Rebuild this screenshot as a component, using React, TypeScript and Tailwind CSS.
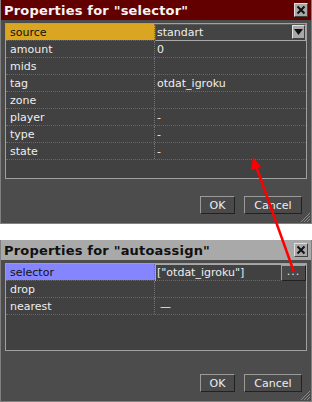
import React from 'react';

type Row = { name: string; value?: React.ReactNode; active?: boolean };

const CloseButton: React.FC = () => (
  <div className="w-[14px] h-[14px] bg-[#a8a8a8] border border-t-[#e0e0e0] border-l-[#e0e0e0] border-b-[#404040] border-r-[#404040] flex items-center justify-center">
    <svg width="10" height="10" viewBox="0 0 10 10">
      <path d="M1.5 1.5 L8.5 8.5 M8.5 1.5 L1.5 8.5" stroke="#111" strokeWidth="2" />
    </svg>
  </div>
);

const Grip: React.FC = () => (
  <svg width="12" height="12" viewBox="0 0 12 12" className="absolute right-0 bottom-0">
    <path d="M11 2 L2 11 M11 5 L5 11 M11 8 L8 11" stroke="#8a8a8a" strokeWidth="1" />
  </svg>
);

const Button: React.FC<{ label: string; w: string }> = ({ label, w }) => (
  <div
    className={`${w} h-[18px] border border-t-[#9a9a9a] border-l-[#9a9a9a] border-b-[#222] border-r-[#222] bg-[#4a4a4a] flex items-center justify-center text-[#eeeeee]`}
  >
    {label}
  </div>
);

const Dialog: React.FC<{
  title: string;
  focused: boolean;
  rows: Row[];
  tableH: string;
  highlight: string;
  height: string;
}> = ({ title, focused, rows, tableH, highlight, height }) => (
  <div className={`relative ${height} bg-[#4c4c4c] border-l border-r border-b border-[#808080] flex flex-col`}>
    <div
      className={`h-[20px] flex items-center justify-between pl-[3px] pr-[3px] ${
        focused ? 'bg-[#620000] text-[#f4f4f4]' : 'bg-[#a9a9a9] text-[#111]'
      }`}
    >
      <span className="text-[13px] font-bold tracking-[0.2px]">{title}</span>
      <CloseButton />
    </div>
    <div className="px-[4px] pt-[3px]">
      <div className={`${tableH} border border-[#a0a0a0] bg-[#414141]`}>
        {rows.map((r) => (
          <div key={r.name} className="h-[17px] flex border-b border-dotted border-[#686868]">
            <div
              className={`w-[149px] shrink-0 pl-[4px] flex items-center border-r border-dotted border-[#747474] ${
                r.active ? `${highlight} text-[#111]` : 'text-[#eeeeee]'
              }`}
            >
              {r.name}
            </div>
            <div className="flex-1 flex items-center text-[#eeeeee] min-w-0">{r.value}</div>
          </div>
        ))}
      </div>
    </div>
    <div className="flex-1 flex items-end justify-end gap-[9px] pr-[9px] pb-[9px]">
      <Button label="OK" w="w-[35px]" />
      <Button label="Cancel" w="w-[58px]" />
    </div>
    <Grip />
  </div>
);

const Plain: React.FC<{ text: string }> = ({ text }) => <span className="pl-[2px]">{text}</span>;

export default function App() {
  const rows1: Row[] = [
    {
      name: 'source',
      active: true,
      value: (
        <div className="w-full h-[17px] flex items-center justify-between border border-t-[#5a5a5a] border-l-[#5a5a5a] border-b-[#a8a8a8] border-r-[#a8a8a8] bg-[#444]">
          <span className="pl-[1px]">standart</span>
          <div className="w-[13px] h-[14px] bg-[#a8a8a8] border border-t-[#e0e0e0] border-l-[#e0e0e0] border-b-[#404040] border-r-[#404040] flex items-center justify-center">
            <svg width="9" height="6" viewBox="0 0 9 6">
              <path d="M0 0 H9 L4.5 6 Z" fill="#111" />
            </svg>
          </div>
        </div>
      ),
    },
    { name: 'amount', value: <Plain text="0" /> },
    { name: 'mids' },
    { name: 'tag', value: <Plain text="otdat_igroku" /> },
    { name: 'zone' },
    { name: 'player', value: <Plain text="-" /> },
    { name: 'type', value: <Plain text="-" /> },
    { name: 'state', value: <Plain text="-" /> },
  ];

  const rows2: Row[] = [
    {
      name: 'selector',
      active: true,
      value: (
        <div className="w-full h-[17px] flex items-center justify-between border-t border-l border-[#a8a8a8]">
          <span className="pl-[1px]">["otdat_igroku"]</span>
          <div className="w-[25px] h-[16px] bg-[#484848] border border-t-[#a0a0a0] border-l-[#a0a0a0] border-b-[#222] border-r-[#222] flex items-end justify-center pb-[3px]">
            <span className="leading-none tracking-[1px]">...</span>
          </div>
        </div>
      ),
    },
    { name: 'drop' },
    { name: 'nearest', value: <span className="pl-[5px]">—</span> },
  ];

  return (
    <div className="relative w-[312px] h-[402px] bg-white overflow-hidden font-['DejaVu_Sans',sans-serif] text-[11px] leading-none">
      <Dialog
        title={'Properties for "selector"'}
        focused
        rows={rows1}
        tableH="h-[156px]"
        highlight="bg-[#daa520]"
        height="h-[224px]"
      />
      <div className="h-[16px]" />
      <Dialog
        title={'Properties for "autoassign"'}
        focused={false}
        rows={rows2}
        tableH="h-[88px]"
        highlight="bg-[#8585ff]"
        height="h-[162px]"
      />
      <svg className="absolute left-0 top-0 pointer-events-none" width="312" height="402">
        <line x1="294" y1="272" x2="256" y2="166" stroke="#ff0000" strokeWidth="2.5" />
        <path d="M253 157 L251 170 L261 167 Z" fill="#ff0000" />
      </svg>
    </div>
  );
}
